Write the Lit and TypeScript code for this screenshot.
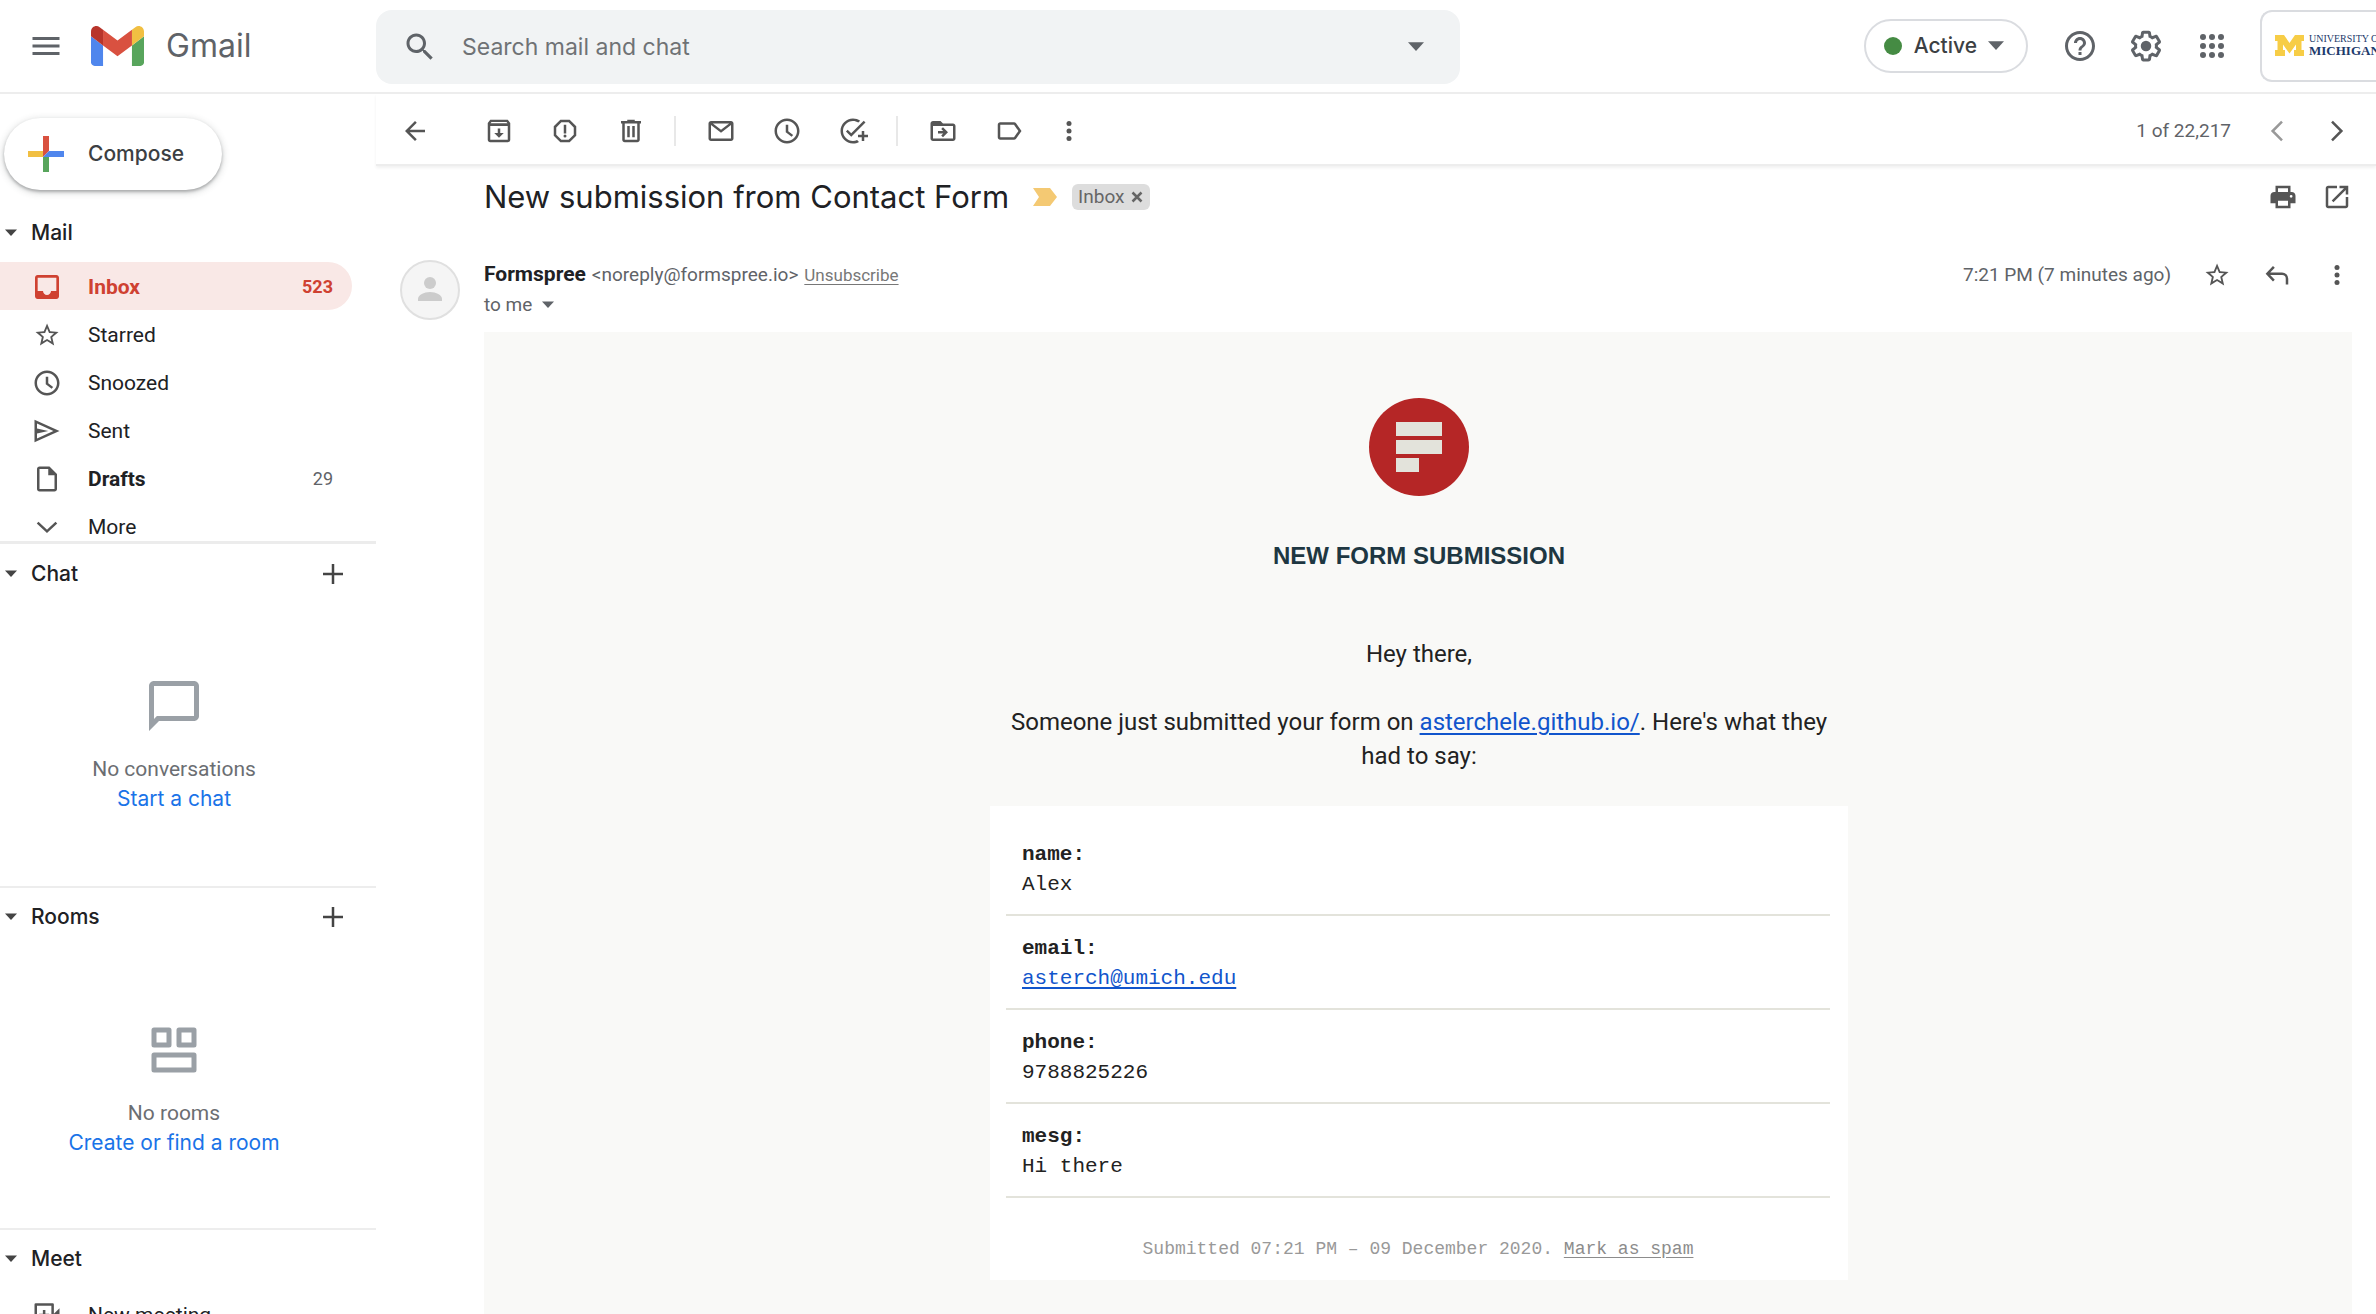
import { LitElement, html, css, svg, nothing, type TemplateResult, type SVGTemplateResult } from "lit";
import { customElement, property } from "lit/decorators.js";
import { classMap } from "lit/directives/class-map.js";

const ICONS: Record<string, SVGTemplateResult> = {
  menu: svg`<path d="M3 18h18v-2H3v2zm0-5h18v-2H3v2zm0-7v2h18V6H3z"/>`,
  search: svg`<path d="M15.5 14h-.79l-.28-.27C15.41 12.59 16 11.11 16 9.5 16 5.91 13.09 3 9.5 3S3 5.91 3 9.5 5.91 16 9.5 16c1.61 0 3.09-.59 4.23-1.57l.27.28v.79l5 4.99L20.49 19l-4.99-5zm-6 0C7.01 14 5 11.99 5 9.5S7.01 5 9.5 5 14 7.01 14 9.5 11.99 14 9.5 14z"/>`,
  help: svg`<path d="M11 18h2v-2h-2v2zm1-16C6.48 2 2 6.48 2 12s4.48 10 10 10 10-4.48 10-10S17.52 2 12 2zm0 18c-4.41 0-8-3.59-8-8s3.59-8 8-8 8 3.59 8 8-3.59 8-8 8zm0-14c-2.21 0-4 1.79-4 4h2c0-1.1.9-2 2-2s2 .9 2 2c0 2-3 1.75-3 5h2c0-2.25 3-2.5 3-5 0-2.21-1.79-4-4-4z"/>`,
  settings: svg`<path d="M13.85 22.25h-3.7c-.74 0-1.36-.54-1.45-1.27l-.27-1.89c-.27-.14-.53-.29-.79-.46l-1.8.72c-.7.26-1.47-.03-1.81-.65L2.2 15.53c-.35-.66-.2-1.44.36-1.88l1.53-1.19c-.01-.15-.02-.3-.02-.46 0-.15.01-.31.02-.46l-1.52-1.19c-.59-.45-.74-1.26-.37-1.88l1.85-3.19c.34-.62 1.11-.9 1.79-.63l1.81.73c.26-.17.52-.32.78-.46l.27-1.91c.09-.7.71-1.25 1.44-1.25h3.7c.74 0 1.36.54 1.45 1.27l.27 1.89c.27.14.53.29.79.46l1.8-.72c.71-.26 1.48.03 1.82.65l1.84 3.18c.36.66.2 1.44-.36 1.88l-1.52 1.19c.01.15.02.3.02.46s-.01.31-.02.46l1.52 1.19c.56.45.72 1.23.37 1.86l-1.86 3.22c-.34.62-1.11.9-1.8.63l-1.8-.72c-.26.17-.52.32-.78.46l-.27 1.91c-.1.68-.72 1.22-1.46 1.22zm-3.23-2h2.76l.37-2.55.53-.22c.44-.18.88-.44 1.34-.78l.45-.34 2.38.96 1.38-2.4-2.03-1.58.07-.56c.03-.26.06-.51.06-.78s-.03-.53-.06-.78l-.07-.56 2.03-1.58-1.39-2.4-2.39.96-.45-.35c-.42-.32-.87-.58-1.33-.77l-.52-.22-.37-2.55h-2.76l-.37 2.55-.53.21c-.44.19-.88.44-1.34.79l-.45.33-2.38-.95-1.39 2.39 2.03 1.58-.07.56a7 7 0 0 0-.06.79c0 .26.02.53.06.78l.07.56-2.03 1.58 1.38 2.4 2.39-.96.45.35c.43.33.86.58 1.33.77l.53.22.38 2.55z"/><circle cx="12" cy="12" r="3.5"/>`,
  apps: svg`${[6, 12, 18].map((y) => [6, 12, 18].map((x) => svg`<circle cx=${x} cy=${y} r="2"/>`))}`,
  back: svg`<path d="M20 11H7.83l5.59-5.59L12 4l-8 8 8 8 1.41-1.41L7.83 13H20v-2z"/>`,
  archive: svg`<path fill-rule="evenodd" d="M19 3H5L3 5.500V19c0 1.100.9 2 2 2h14c1.100 0 2-.9 2-2V5.500L19 3zM6 4.800h12l.8 1H5.200zM5 19V8h14v11z"/><path d="M11 10h2v3.500h2.800L12 17.300 8.200 13.500H11z"/>`,
  spam: svg`<path d="M15.73 3H8.27L3 8.27v7.46L8.27 21h7.46L21 15.73V8.27L15.73 3zM19 14.900L14.900 19H9.100L5 14.900V9.100L9.100 5h5.800L19 9.100v5.800z"/><circle cx="12" cy="16" r="1.200"/><path d="M11 7h2v7h-2z"/>`,
  trash: svg`<path d="M15 4V3H9v1H4v2h1v13c0 1.100.9 2 2 2h10c1.100 0 2-.9 2-2V6h1V4h-5zm2 15H7V6h10v13zM9 8h2v9H9zm4 0h2v9h-2z"/>`,
  mail: svg`<path d="M22 6c0-1.100-.9-2-2-2H4c-1.100 0-2 .9-2 2v12c0 1.100.9 2 2 2h16c1.100 0 2-.9 2-2V6zm-3.500 0L12 11 5.500 6h13zM20 18H4V7.200l8 6.200 8-6.200V18z"/>`,
  clock: svg`<path d="M11.99 2C6.47 2 2 6.48 2 12s4.47 10 9.99 10C17.52 22 22 17.52 22 12S17.52 2 11.99 2zM12 20c-4.42 0-8-3.58-8-8s3.58-8 8-8 8 3.58 8 8-3.58 8-8 8zm1-13h-2v6l4.700 3.600 1.200-1.500L13 12.200z"/>`,
  task: svg`<path d="M22 5.180L10.590 16.600l-4.240-4.240 1.410-1.410 2.830 2.830 10-10L22 5.180zM12 20c-4.410 0-8-3.590-8-8s3.590-8 8-8c1.570 0 3.040.46 4.280 1.250l1.450-1.450C16.100 2.670 14.130 2 12 2 6.480 2 2 6.480 2 12s4.480 10 10 10c1.730 0 3.360-.44 4.780-1.220l-1.500-1.500c-1 .46-2.110.72-3.280.72zm7-5h-3v2h3v3h2v-3h3v-2h-3v-3h-2v3z"/>`,
  move: svg`<path d="M20 6h-8l-2-2H4c-1.100 0-2 .9-2 2v12c0 1.100.9 2 2 2h16c1.100 0 2-.9 2-2V8c0-1.100-.9-2-2-2zm0 12H4V8h16v10z"/><path d="M12.160 12H8v2h4.160l-1.590 1.590L11.990 17 16 13.010 11.990 9l-1.410 1.410L12.160 12z"/>`,
  label: svg`<path d="M17.630 5.840C17.270 5.330 16.670 5 16 5L5 5.010C3.900 5.010 3 5.900 3 7v10c0 1.100.9 1.990 2 1.990L16 19c.67 0 1.270-.33 1.630-.84L22 12l-4.370-6.160zM16 17H5V7h11l3.550 5L16 17z"/>`,
  more: svg`<circle cx="12" cy="6" r="2"/><circle cx="12" cy="12" r="2"/><circle cx="12" cy="18" r="2"/>`,
  prev: svg`<path class="line" d="M16 4.500L8.500 12l7.500 7.500"/>`,
  next: svg`<path class="line" d="M8 4.500l7.500 7.500L8 19.500"/>`,
  print: svg`<path fill-rule="evenodd" d="M19 8H5c-1.660 0-3 1.340-3 3v6h4v4h12v-4h4v-6c0-1.660-1.340-3-3-3zm-3 11H8v-4h8v4zm2.500-6.500a1.100 1.100 0 1 1 0-2.200 1.100 1.100 0 0 1 0 2.200z"/><path d="M6 3h12v5h-2V5H8v3H6z"/>`,
  open: svg`<path d="M19 19H5V5h7V3H5c-1.110 0-2 .9-2 2v14c0 1.100.89 2 2 2h14c1.100 0 2-.9 2-2v-7h-2v7zM14 3v2h3.590l-9.830 9.830 1.410 1.410L19 6.410V10h2V3h-7z"/>`,
  star: svg`<path transform="translate(1 1) scale(.92)" d="M22 9.240l-7.190-.62L12 2 9.190 8.630 2 9.240l5.460 4.730L5.820 21 12 17.270 18.180 21l-1.630-7.030L22 9.240zM12 15.400l-3.760 2.270 1-4.280-3.320-2.880 4.380-.38L12 6.100l1.710 4.040 4.380.38-3.320 2.880 1 4.280L12 15.400z"/>`,
  reply: svg`<path class="line" d="M9.500 5.500L4.300 11l5.200 5.500M4.500 11H16a4 4 0 0 1 4 4v4.500"/>`,
  inbox: svg`<path transform="translate(-.8 -.8) scale(1.067)" d="M19 3H5c-1.100 0-2 .9-2 2v14c0 1.100.89 2 2 2h14c1.100 0 2-.9 2-2V5c0-1.100-.9-2-2-2zm0 12h-4c0 1.660-1.350 3-3 3s-3-1.340-3-3H5V5h14v10z"/>`,
  send: svg`<path d="M2 3v18l20-9L2 3zm2 11l9-2-9-2V6.090L17.130 12 4 17.910V14z"/>`,
  draft: svg`<path d="M14 2H6c-1.100 0-2 .9-2 2v16c0 1.100.9 2 2 2h12c1.100 0 2-.9 2-2V8l-6-6zM6 20V4h7v5h5v11H6z"/>`,
  down: svg`<path class="line" d="M4.500 8.500L12 15.500l7.500-7"/>`,
  plus: svg`<path class="line" d="M12 4v16M4 12h16"/>`,
  bubble: svg`<path d="M4 4h16v12H5.170L4 17.170V4m0-2c-1.100 0-1.990.9-1.990 2L2 22l4-4h14c1.100 0 2-.9 2-2V4c0-1.100-.9-2-2-2H4z"/>`,
  rooms: svg`<path class="line" stroke-linejoin="round" d="M4 4h6v6H4zM14 4h6v6h-6zM4 14h16v6H4z"/>`,
  meeting: svg`<path class="line" stroke-linejoin="round" d="M3 3.500h13.500v17H3zM9.700 8v8M5.700 12h8"/><path d="M17 11.500l5-5v11l-5-5z"/>`,
  caret: svg`<path d="M0 5h24L12 18z"/>`,
  close: svg`<path d="M3 3L21 21M21 3L3 21" stroke="currentColor" stroke-width="5"/>`,
};

@customElement("mail-icon")
export class MailIcon extends LitElement {
  @property() name = "";
  static styles = css`
    :host { display: inline-flex; flex: none; width: 30px; height: 30px; }
    svg { width: 100%; height: 100%; fill: currentColor; }
    .line { fill: none; stroke: currentColor; stroke-width: 2; }
  `;
  render() {
    return html`<svg viewBox="0 0 24 24" aria-hidden="true">${ICONS[this.name]}</svg>`;
  }
}

const FOLDERS = [
  { icon: "inbox", label: "Inbox", count: "523", active: true, strong: true },
  { icon: "star", label: "Starred" },
  { icon: "clock", label: "Snoozed" },
  { icon: "send", label: "Sent" },
  { icon: "draft", label: "Drafts", count: "29", strong: true },
  { icon: "down", label: "More" },
];

const ACTIONS = [
  [["archive", "Archive"], ["spam", "Report spam"], ["trash", "Delete"]],
  [["mail", "Mark as unread"], ["clock", "Snooze"], ["task", "Add to tasks"]],
  [["move", "Move to"], ["label", "Labels"]],
];

const FIELDS = [
  { key: "name", value: "Alex" },
  { key: "email", value: "asterch@umich.edu", link: true },
  { key: "phone", value: "9788825226" },
  { key: "mesg", value: "Hi there" },
];

@customElement("app-root")
export class AppRoot extends LitElement {
  static styles = css`
    :host {
      --display: Inter, Roboto, sans-serif;
      --grey: #5f6368;
      --ink: #202124;
      --rule: #ededed;
      display: flex;
      flex-direction: column;
      height: 100vh;
      overflow: hidden;
      background: #fff;
      color: var(--ink);
      font: 21px/30px Roboto, sans-serif;
    }
    * { box-sizing: border-box; }
    h1, h2, p, ul, dl, dd { margin: 0; padding: 0; }
    button {
      display: inline-flex; align-items: center; justify-content: center;
      margin: 0; padding: 0; border: 0; background: none;
      color: inherit; font: inherit; cursor: pointer;
    }

    .header {
      display: flex; align-items: center; flex: none;
      height: 94px; padding-bottom: 1px;
      border-bottom: 2px solid var(--rule);
      color: var(--grey);
    }
    .brand { display: flex; align-items: center; flex: none; width: 376px; padding-left: 28px; }
    .brand-logo { width: 53px; height: 40px; margin-left: 27px; }
    .brand-name { margin-left: 22px; font: 32px/40px var(--display); }
    .large { width: 36px; height: 36px; }
    .search {
      display: flex; align-items: center; flex: 0 1 1084px;
      height: 74px; padding: 0 36px 0 26px; margin-top: 3px;
      border-radius: 16px; background: #f1f3f4;
    }
    .search-input {
      flex: 1; min-width: 0; margin: 0 24px; padding: 0; border: 0; outline: 0;
      background: none; color: var(--ink); font: 23px/32px var(--display);
    }
    .search-input::placeholder { color: #6f7275; opacity: 1; }
    .caret { width: 16px; height: 16px; }
    .tools { display: flex; align-items: center; gap: 30px; margin-left: auto; }
    .status {
      height: 54px; padding: 1px 22px 0 18px; margin-right: 4px; gap: 11px;
      border: 2px solid #dadce0; border-radius: 27px;
      color: #3c4043; font: 500 21px/30px var(--display);
    }
    .status .caret { color: var(--grey); }
    .dot { width: 18px; height: 18px; margin-right: 1px; border-radius: 9px; background: #458b43; }
    .account {
      display: flex; align-items: center; flex: none; gap: 5px;
      width: 116px; height: 72px; padding-left: 13px; overflow: hidden;
      border: 2px solid #dadce0; border-right: 0; border-radius: 12px 0 0 12px;
      color: #1d3a6b; text-decoration: none; white-space: nowrap;
    }
    .block-m { flex: none; width: 29px; height: 21px; }
    .school { display: flex; flex-direction: column; font: 10px/10px "Liberation Serif", serif; }
    .school-name { font: 700 13px/13px "Liberation Serif", serif; }

    .body { display: flex; flex: 1; min-height: 0; }
    .sidebar { flex: none; width: 376px; overflow: hidden; }
    .mail { height: 447px; overflow: hidden; }
    .compose {
      height: 72px; margin: 24px 0 0 4px; padding: 0 38px 0 24px; gap: 24px;
      border-radius: 36px; color: #3c4043; font: 500 21px/30px var(--display);
      box-shadow: 0 2px 3px rgba(60, 64, 67, .35), 0 2px 6px 2px rgba(60, 64, 67, .15);
    }
    .compose svg { width: 36px; height: 36px; }
    .section-head { display: flex; align-items: center; height: 60px; padding: 0 28px 0 5px; color: #444; }
    .section-title { flex: 1; margin-left: 14px; color: var(--ink); font: 500 21px/30px var(--display); }
    .small-caret { width: 12px; height: 12px; }
    .mail .section-head { height: 72px; padding-top: 13px; }
    .folders { list-style: none; }
    .folder {
      display: flex; align-items: center; height: 48px; width: 352px;
      padding: 1px 19px 0 32px; border-radius: 0 24px 24px 0;
      color: var(--ink); text-decoration: none;
    }
    .folder mail-icon { color: #555; }
    .folder-name { flex: 1; margin-left: 26px; }
    .folder-count { color: var(--grey); font-size: 18px; }
    .strong .folder-name { font-weight: 700; }
    .active, .active mail-icon, .active .folder-count { color: #cf4131; font-weight: 700; }
    .active { background: #f9e8e6; }
    .section { height: 342px; border-top: 2px solid var(--rule); }
    .section .section-head { padding-bottom: 2px; }
    .chat { height: 345px; border-top-width: 3px; border-color: #ececec; }
    .chat .section-head { padding-bottom: 0; }
    .empty {
      display: flex; flex-direction: column; align-items: center;
      width: 348px; padding-top: 72px; color: #6b6e72;
    }
    .empty mail-icon { width: 60px; height: 60px; margin-bottom: 18px; color: #9aa0a6; }
    .empty-link { color: #1a73e8; text-decoration: none; font: 21px/30px var(--display); }

    .main { display: flex; flex-direction: column; flex: 1; min-width: 0; color: #555; }
    .toolbar {
      display: flex; align-items: center; flex: none; height: 72px;
      padding: 3px 24px 0; border-bottom: 2px solid var(--rule);
      box-shadow: 0 2px 3px rgba(0, 0, 0, .06);
    }
    .group { display: flex; gap: 36px; }
    .group + .group { margin-left: 28px; padding-left: 30px; border-left: 2px solid #e8e8e8; }
    .first { margin-left: 54px; }
    .overflow { margin-left: 30px; }
    .count { margin-left: auto; margin-right: 31px; color: var(--grey); font-size: 19px; }
    .muted { color: #999; }
    .next { margin-left: 30px; }

    .subject { display: flex; align-items: center; flex: none; height: 62px; padding: 0 24px 0 108px; }
    .subject-text { color: var(--ink); font: 400 31px/40px var(--display); white-space: nowrap; }
    .marker { width: 24px; height: 18px; margin: 0 15px 0 24px; fill: #f4c973; }
    .chip {
      display: flex; align-items: center; gap: 7px; height: 26px; padding: 0 7px 0 6px;
      border-radius: 6px; background: #ddd; color: #666; font-size: 19px;
    }
    .chip mail-icon { width: 12px; height: 12px; }
    .print { margin-left: auto; }
    .print + button { margin-left: 24px; }

    .sender { display: flex; align-items: flex-start; flex: none; height: 104px; padding: 32px 24px 0; }
    .avatar { flex: none; width: 60px; height: 60px; }
    .who { flex: 1; min-width: 0; margin: -1px 0 0 24px; color: var(--grey); font-size: 19px; }
    .from { display: flex; align-items: baseline; gap: 6px; }
    .name { color: var(--ink); font-size: 21px; }
    .unsubscribe { color: #777; font-size: 17px; text-decoration: underline; text-underline-offset: 3px; }
    .to { display: flex; align-items: center; gap: 10px; }
    .date { color: var(--grey); font-size: 19px; margin-right: 31px; }
    .message-actions { display: flex; gap: 30px; }

    .message {
      flex: 1; min-height: 0; margin: 0 24px 0 108px; padding: 66px 0 0 2px;
      background: #f9f9f7; color: #222; text-align: center; overflow: hidden;
      font-size: 24px; line-height: 34px;
    }
    .form-logo { display: block; width: 100px; height: 98px; margin: 0 auto; }
    .message-title {
      margin-top: 43px; color: #1e3742;
      font: 700 24px/34px "Liberation Sans", Arial, sans-serif;
    }
    .copy { width: 858px; max-width: 100%; margin: 0 auto; padding: 0 16px; }
    .hello { margin-top: 64px; margin-bottom: 34px; }
    .link { color: #1155cc; text-underline-offset: 3px; text-decoration-thickness: 2px; }
    .card {
      width: 858px; max-width: 100%; margin: 33px auto 0; padding: 16px 18px 16px 16px;
      background: #fff; text-align: left;
      font: 21px/30px "Liberation Mono", "Courier New", monospace;
    }
    .field { padding: 18px 16px 14px; border-bottom: 2px solid #e3e3db; }
    .key { font-weight: 700; }
    .stamp { margin-top: 36px; color: #999; font-size: 18px; text-align: center; }
    .stamp-link { color: #8c8c8c; text-underline-offset: 3px; }
  `;

  private head(title: string, add = false): TemplateResult {
    return html`<div class="section-head">
      <mail-icon class="small-caret" name="caret"></mail-icon>
      <h2 class="section-title">${title}</h2>
      ${add ? html`<button aria-label=${title}><mail-icon name="plus"></mail-icon></button>` : nothing}
    </div>`;
  }

  private empty(icon: string, text: string, link: string): TemplateResult {
    return html`<div class="empty">
      <mail-icon name=${icon}></mail-icon>
      <p>${text}</p>
      <a class="empty-link" href="#">${link}</a>
    </div>`;
  }

  private folder(f: { icon: string; label: string; count?: string; active?: boolean; strong?: boolean }): TemplateResult {
    return html`<li>
      <a href="#" class=${classMap({ folder: true, active: !!f.active, strong: !!f.strong })}>
        <mail-icon name=${f.icon}></mail-icon>
        <span class="folder-name">${f.label}</span>
        ${f.count ? html`<span class="folder-count">${f.count}</span>` : nothing}
      </a>
    </li>`;
  }

  private header(): TemplateResult {
    return html`<header class="header">
      <div class="brand">
        <button aria-label="Main menu"><mail-icon class="large" name="menu"></mail-icon></button>
        <svg class="brand-logo" viewBox="52 42 88 66" aria-hidden="true">
          <path fill="#4f86ed" d="M58 108h14V74L52 59v43c0 3.320 2.690 6 6 6" />
          <path fill="#58a55c" d="M120 108h14c3.320 0 6-2.690 6-6V59l-20 15" />
          <path fill="#f1bf42" d="M120 48v26l20-15v-8c0-7.420-8.470-11.650-14.400-7.200" />
          <path fill="#d95140" d="M72 74V48l24 18 24-18v26L96 92" />
          <path fill="#b8352b" d="M52 51v8l20 15V48l-5.600-4.200c-5.940-4.450-14.400-.22-14.400 7.200" />
        </svg>
        <span class="brand-name">Gmail</span>
      </div>
      <form class="search" role="search">
        <button type="button" aria-label="Search"><mail-icon class="large" name="search"></mail-icon></button>
        <input class="search-input" type="text" aria-label="Search mail and chat" placeholder="Search mail and chat" />
        <button type="button" aria-label="Search options"><mail-icon class="caret" name="caret"></mail-icon></button>
      </form>
      <div class="tools">
        <button class="status"><span class="dot"></span>Active<mail-icon class="caret" name="caret"></mail-icon></button>
        <button aria-label="Support"><mail-icon class="large" name="help"></mail-icon></button>
        <button aria-label="Settings"><mail-icon class="large" name="settings"></mail-icon></button>
        <button aria-label="Apps"><mail-icon class="large" name="apps"></mail-icon></button>
        <a class="account" href="#">
          <svg class="block-m" viewBox="0 0 29 21" aria-hidden="true">
            <path fill="#f7cd46" d="M0 0h9l5.500 8L20 0h9v6h-2.500v9H29v6h-10v-6h2V9.500l-6.500 9L8 9.500V15h2v6H0v-6h2.500V6H0z" />
          </svg>
          <span class="school"><span>UNIVERSITY OF</span><span class="school-name">MICHIGAN</span></span>
        </a>
      </div>
    </header>`;
  }

  private toolbar(): TemplateResult {
    return html`<div class="toolbar">
      <button aria-label="Back to Inbox"><mail-icon name="back"></mail-icon></button>
      ${ACTIONS.map(
        (group, i) => html`<div class=${classMap({ group: true, first: i === 0 })}>
          ${group.map(([icon, label]) => html`<button aria-label=${label}><mail-icon name=${icon}></mail-icon></button>`)}
        </div>`,
      )}
      <button class="overflow" aria-label="More"><mail-icon name="more"></mail-icon></button>
      <span class="count">1 of 22,217</span>
      <button class="muted" aria-label="Newer"><mail-icon name="prev"></mail-icon></button>
      <button class="next" aria-label="Older"><mail-icon name="next"></mail-icon></button>
    </div>`;
  }

  render() {
    return html`
      ${this.header()}
      <div class="body">
        <nav class="sidebar">
          <div class="mail">
            <button class="compose">
              <svg viewBox="0 0 36 36" aria-hidden="true">
                <path fill="#d95140" d="M15 0h6v15l-6 6z" />
                <path fill="#4f86ed" d="M21 15h15v6H15z" />
                <path fill="#58a55c" d="M15 21h6v15h-6z" />
                <path fill="#f1bf42" d="M0 15h15v6H0z" />
              </svg>
              Compose
            </button>
            ${this.head("Mail")}
            <ul class="folders">${FOLDERS.map((f) => this.folder(f))}</ul>
          </div>
          <div class="section chat">${this.head("Chat", true)}${this.empty("bubble", "No conversations", "Start a chat")}</div>
          <div class="section">${this.head("Rooms", true)}${this.empty("rooms", "No rooms", "Create or find a room")}</div>
          <div class="section">
            ${this.head("Meet")}
            <ul class="folders">${this.folder({ icon: "meeting", label: "New meeting" })}</ul>
          </div>
        </nav>
        <main class="main">
          ${this.toolbar()}
          <div class="subject">
            <h1 class="subject-text">New submission from Contact Form</h1>
            <svg class="marker" viewBox="0 0 24 18" aria-hidden="true"><path d="M0 0h17l7 9-7 9H0l6-9z" /></svg>
            <span class="chip">Inbox<button aria-label="Remove label Inbox"><mail-icon name="close"></mail-icon></button></span>
            <button class="print" aria-label="Print all"><mail-icon name="print"></mail-icon></button>
            <button aria-label="In new window"><mail-icon name="open"></mail-icon></button>
          </div>
          <div class="sender">
            <svg class="avatar" viewBox="0 0 60 60" aria-hidden="true">
              <circle cx="30" cy="30" r="29" fill="#f5f5f5" stroke="#e0e0e0" stroke-width="2" />
              <circle cx="30" cy="23" r="6" fill="#ccc" />
              <path fill="#ccc" d="M18 41v-2c0-4 6-7 12-7s12 3 12 7v2z" />
            </svg>
            <div class="who">
              <div class="from">
                <strong class="name">Formspree</strong>
                <span>&lt;noreply@formspree.io&gt;</span>
                <a class="unsubscribe" href="#">Unsubscribe</a>
              </div>
              <div class="to">to me <mail-icon class="small-caret" name="caret"></mail-icon></div>
            </div>
            <time class="date">7:21 PM (7 minutes ago)</time>
            <div class="message-actions">
              <button aria-label="Star"><mail-icon name="star"></mail-icon></button>
              <button aria-label="Reply"><mail-icon name="reply"></mail-icon></button>
              <button aria-label="More"><mail-icon name="more"></mail-icon></button>
            </div>
          </div>
          <article class="message">
            <svg class="form-logo" viewBox="0 0 100 98" aria-hidden="true">
              <ellipse cx="50" cy="49" rx="50" ry="49" fill="#b52626" />
              <path fill="#e3e3db" d="M27 24h46v14H27zM27 42h46v14H27zM27 60h23v14H27z" />
            </svg>
            <h2 class="message-title">NEW FORM SUBMISSION</h2>
            <div class="copy">
              <p class="hello">Hey there,</p>
              <p>Someone just submitted your form on <a class="link" href="#">asterchele.github.io/</a>. Here's what they had to say:</p>
            </div>
            <div class="card">
              <dl>
                ${FIELDS.map(
                  (f) => html`<div class="field">
                    <dt class="key">${f.key}:</dt>
                    <dd>${f.link ? html`<a class="link" href="#">${f.value}</a>` : f.value}</dd>
                  </div>`,
                )}
              </dl>
              <p class="stamp">Submitted 07:21 PM – 09 December 2020. <a class="stamp-link" href="#">Mark as spam</a></p>
            </div>
          </article>
        </main>
      </div>
    `;
  }
}
